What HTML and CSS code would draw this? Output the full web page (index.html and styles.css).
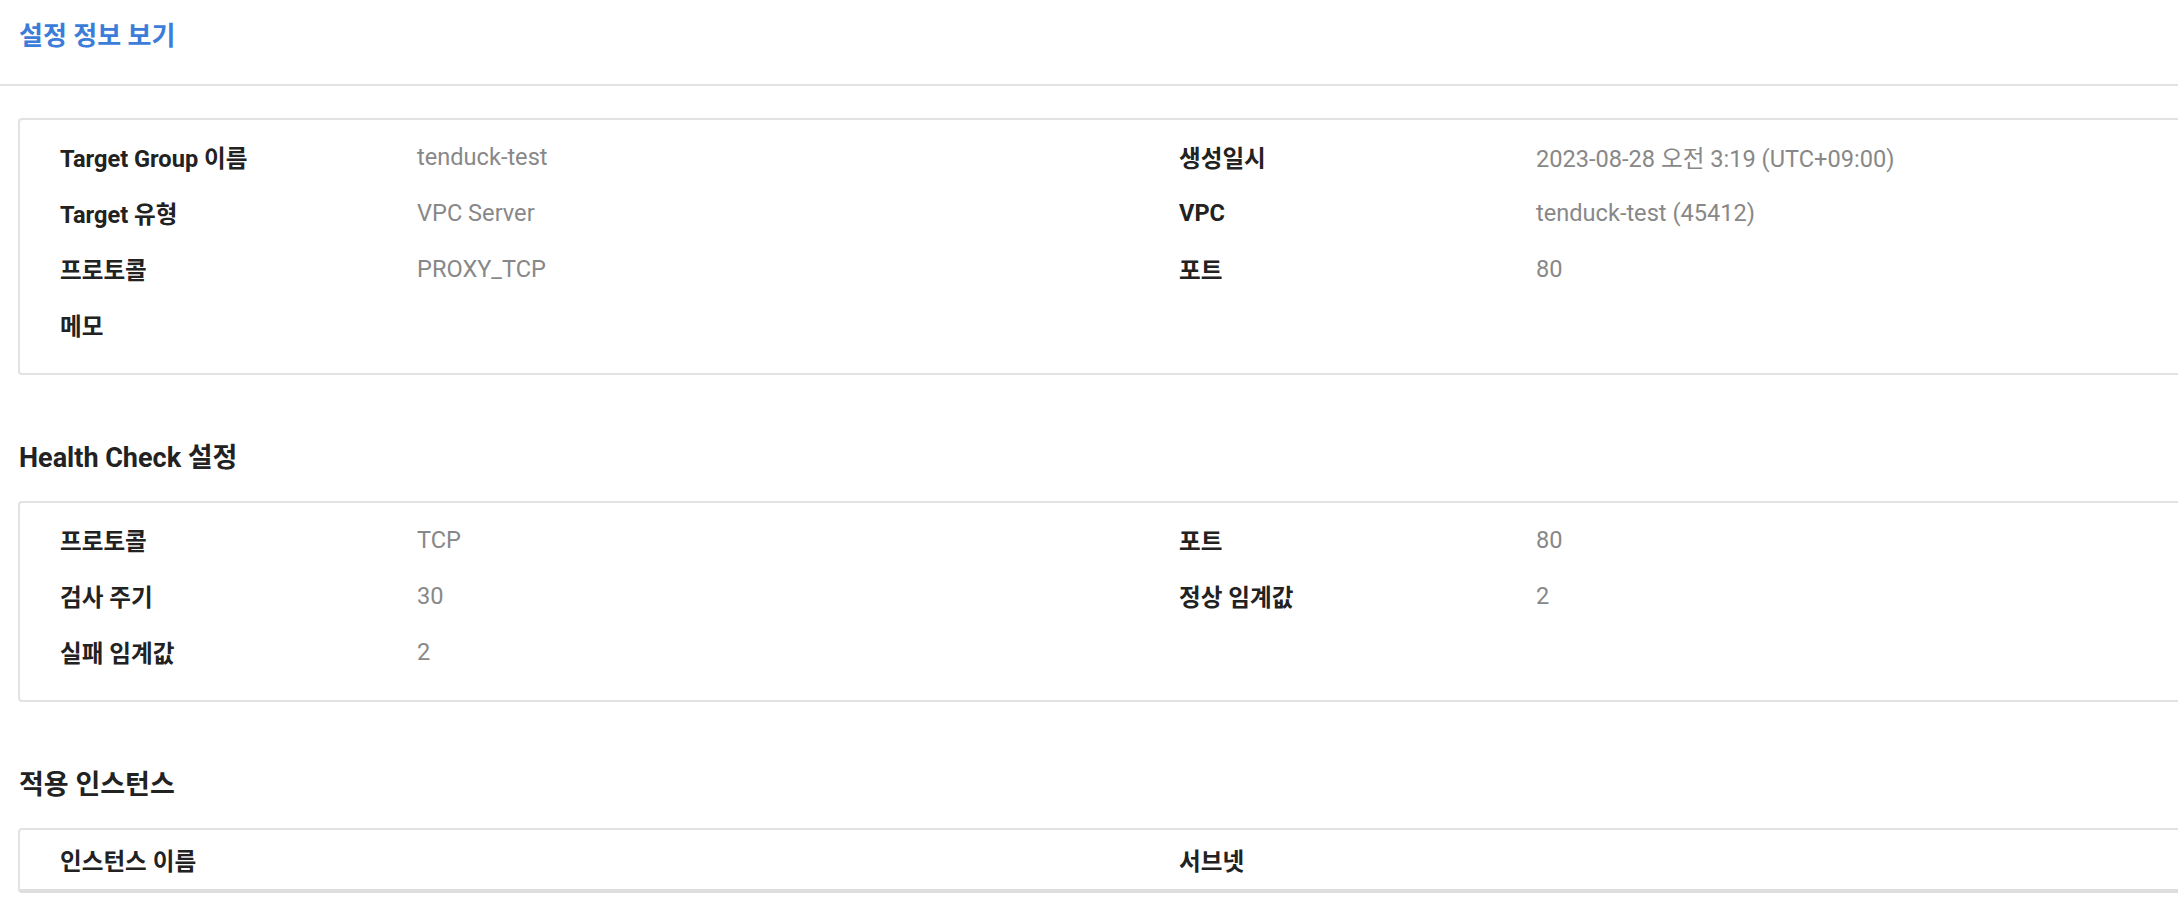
FILE: index.html
```html
<!DOCTYPE html>
<html lang="ko">
<head>
  <meta charset="UTF-8" />
  <meta name="viewport" content="width=device-width, initial-scale=1.0"/>
  <title>설정 정보 보기</title>
  <link rel="stylesheet" href="styles.css">
</head>
<body>

  <div class="page-header">
    <h1 class="page-title">설정 정보 보기</h1>
  </div>

  <div class="content">
    <div class="info-box">
      <div class="info-row">
        <span class="info-label">Target Group 이름</span>
        <span class="info-value">tenduck-test</span>
        <span class="info-label">생성일시</span>
        <span class="info-value">2023-08-28 오전 3:19 (UTC+09:00)</span>
      </div>
      <div class="info-row">
        <span class="info-label">Target 유형</span>
        <span class="info-value">VPC Server</span>
        <span class="info-label">VPC</span>
        <span class="info-value">tenduck-test (45412)</span>
      </div>
      <div class="info-row">
        <span class="info-label">프로토콜</span>
        <span class="info-value">PROXY_TCP</span>
        <span class="info-label">포트</span>
        <span class="info-value">80</span>
      </div>
      <div class="info-row">
        <span class="info-label">메모</span>
        <span class="info-value"></span>
      </div>
    </div>

    <h2 class="section-title">Health Check 설정</h2>
    <div class="info-box">
      <div class="info-row">
        <span class="info-label">프로토콜</span>
        <span class="info-value">TCP</span>
        <span class="info-label">포트</span>
        <span class="info-value">80</span>
      </div>
      <div class="info-row">
        <span class="info-label">검사 주기</span>
        <span class="info-value">30</span>
        <span class="info-label">정상 임계값</span>
        <span class="info-value">2</span>
      </div>
      <div class="info-row">
        <span class="info-label">실패 임계값</span>
        <span class="info-value">2</span>
      </div>
    </div>

    <h2 class="section-title">적용 인스턴스</h2>
    <div class="info-box table-box">
      <div class="info-row table-head">
        <span class="info-label">인스턴스 이름</span>
        <span class="info-value"></span>
        <span class="info-label">서브넷</span>
        <span class="info-value"></span>
      </div>
    </div>
  </div>

</body>
</html>
```

FILE: styles.css
```css
html, body {
  overflow: hidden;
}

body {
  margin: 0;
  font-family: Roboto, "Noto Sans CJK KR", sans-serif;
  background: #fff;
  color: #222;
}

.page-header {
  padding: 19px 19px 31px;
  border-bottom: 2px solid #e3e3e3;
}

.page-title {
  margin: 0;
  font-size: 26px;
  line-height: 34px;
  font-weight: 700;
  color: #3b7dd8;
}

.content {
  padding: 32px 0 0 18px;
}

.section-title {
  margin: 66px 0 26px 1px;
  font-size: 27px;
  line-height: 34px;
  font-weight: 700;
  color: #222;
}

.info-box {
  width: 2260px;
  padding: 9px 0 20px 40px;
  border: 2px solid #e2e2e2;
  border-radius: 4px;
}

.info-row {
  display: grid;
  grid-template-columns: 357px 762px 357px 762px;
  height: 56px;
  align-items: center;
  font-size: 23.6px;
}

.info-label {
  font-weight: 700;
  color: #222;
}

.info-value {
  color: #888;
}

.table-box {
  padding: 0 0 0 40px;
  border-bottom-width: 4px;
  border-bottom-color: #dedede;
}

.table-head {
  height: 59px;
}
```
